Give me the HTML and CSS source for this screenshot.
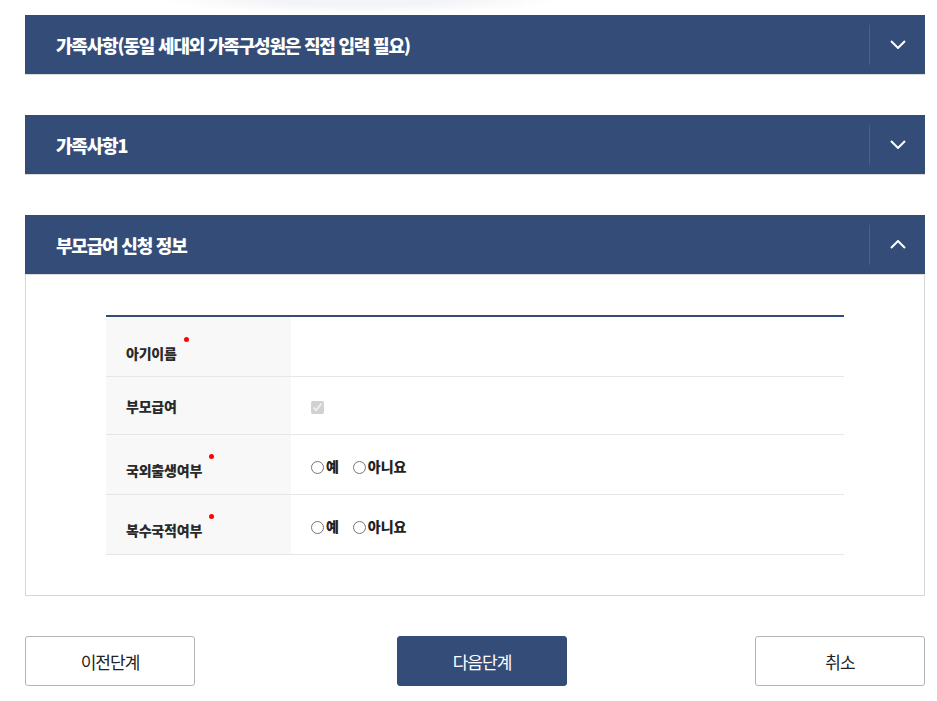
FILE: index.html
```html
<!DOCTYPE html>
<html lang="ko">
<head>
<meta charset="utf-8">
<title>부모급여 신청</title>
<link rel="stylesheet" href="styles.css">
</head>
<body>
<div class="topfade"></div>
<div class="page">
  <section class="panel">
    <div class="bar">
      <h2 class="bar-title">가족사항(동일 세대외 가족구성원은 직접 입력 필요)</h2>
      <button class="toggle" type="button" aria-label="펼치기">
        <svg width="16" height="9" viewBox="0 0 16 9"><polyline points="1,1 8,8 15,1" fill="none" stroke="#fff" stroke-width="2"/></svg>
      </button>
    </div>
  </section>

  <section class="panel">
    <div class="bar">
      <h2 class="bar-title">가족사항1</h2>
      <button class="toggle" type="button" aria-label="펼치기">
        <svg width="16" height="9" viewBox="0 0 16 9"><polyline points="1,1 8,8 15,1" fill="none" stroke="#fff" stroke-width="2"/></svg>
      </button>
    </div>
  </section>

  <section class="panel">
    <div class="bar">
      <h2 class="bar-title">부모급여 신청 정보</h2>
      <button class="toggle" type="button" aria-label="접기">
        <svg width="16" height="9" viewBox="0 0 16 9"><polyline points="1,8 8,1 15,8" fill="none" stroke="#fff" stroke-width="2"/></svg>
      </button>
    </div>
    <div class="body">
      <table class="form">
        <tr class="r1">
          <th>아기이름<span class="req"></span></th>
          <td></td>
        </tr>
        <tr class="r2">
          <th>부모급여</th>
          <td><input type="checkbox" checked disabled class="chk"></td>
        </tr>
        <tr class="r3">
          <th>국외출생여부<span class="req"></span></th>
          <td>
            <label class="opt"><input type="radio" name="a">예</label>
            <label class="opt"><input type="radio" name="a">아니요</label>
          </td>
        </tr>
        <tr class="r3">
          <th>복수국적여부<span class="req"></span></th>
          <td>
            <label class="opt"><input type="radio" name="b">예</label>
            <label class="opt"><input type="radio" name="b">아니요</label>
          </td>
        </tr>
      </table>
    </div>
  </section>

  <div class="actions">
    <button class="btn" type="button">이전단계</button>
    <button class="btn primary" type="button">다음단계</button>
    <button class="btn last" type="button">취소</button>
  </div>
</div>
</body>
</html>
```

FILE: styles.css
```css
html, body {
  margin: 0;
  padding: 0;
  background: #fff;
}
body {
  font-family: "Noto Sans CJK KR", "Noto Sans", sans-serif;
  color: #222;
}
.topfade {
  height: 15px;
  background: radial-gradient(ellipse 200px 14px at 360px 0, #f3f4f7 40%, rgba(255,255,255,0) 100%);
}
.page {
  padding: 0 12px 0 25px;
}
.panel {
  margin-bottom: 40px;
}
.bar {
  display: flex;
  align-items: center;
  height: 59px;
  background: #344d78;
  border-bottom: 1px solid #dcdcdc;
}
.bar-title {
  flex: 1;
  margin: 0;
  padding-left: 31px;
  color: #fff;
  font-size: 18px;
  font-weight: 800;
  letter-spacing: -1.2px;
}
.toggle {
  width: 56px;
  height: 40px;
  padding: 0;
  margin: 0;
  background: transparent;
  border: none;
  border-left: 1px solid #4b6189;
  display: flex;
  align-items: center;
  justify-content: center;
}
.body {
  border: 1px solid #d6d6d6;
  border-top: none;
  padding: 40px 80px;
}
.form {
  width: 100%;
  border-collapse: collapse;
  border-top: 2px solid #344d78;
}
.form th {
  width: 185px;
  box-sizing: border-box;
  background: #f8f8f8;
  text-align: left;
  padding: 0 0 0 20px;
  font-size: 14px;
  font-weight: 800;
  color: #2a2a2a;
  letter-spacing: -0.2px;
  border-bottom: 1px solid #e6e6e6;
}
.form td {
  padding: 0 20px;
  border-bottom: 1px solid #e6e6e6;
  font-size: 14px;
  font-weight: 800;
  color: #222;
}
.r1 th, .r1 td { height: 53px; padding-top: 6px; }
.r2 th, .r2 td { height: 57px; }
.r3 th, .r3 td { height: 55px; padding-top: 4px; }
.req {
  display: inline-block;
  width: 5px;
  height: 5px;
  border-radius: 50%;
  background: #f00;
  margin-left: 7px;
  vertical-align: 17px;
}
.chk {
  margin: 0;
  width: 13px;
  height: 13px;
  vertical-align: middle;
}
.opt {
  display: inline-flex;
  align-items: center;
  margin-right: 10px;
}
.opt input {
  margin: 3px 2px 0 0;
  width: 13px;
  height: 13px;
}
.actions {
  display: flex;
  width: 900px;
}
.btn {
  width: 170px;
  height: 50px;
  box-sizing: border-box;
  border: 1px solid #b4b4b4;
  border-radius: 3px;
  background: #fff;
  font-family: "Noto Sans CJK KR", sans-serif;
  font-size: 17px;
  letter-spacing: -1px;
  color: #222;
}
.btn.primary {
  margin-left: 202px;
  background: #344d78;
  border-color: #344d78;
  color: #fff;
}
.btn.last {
  margin-left: auto;
}
```
